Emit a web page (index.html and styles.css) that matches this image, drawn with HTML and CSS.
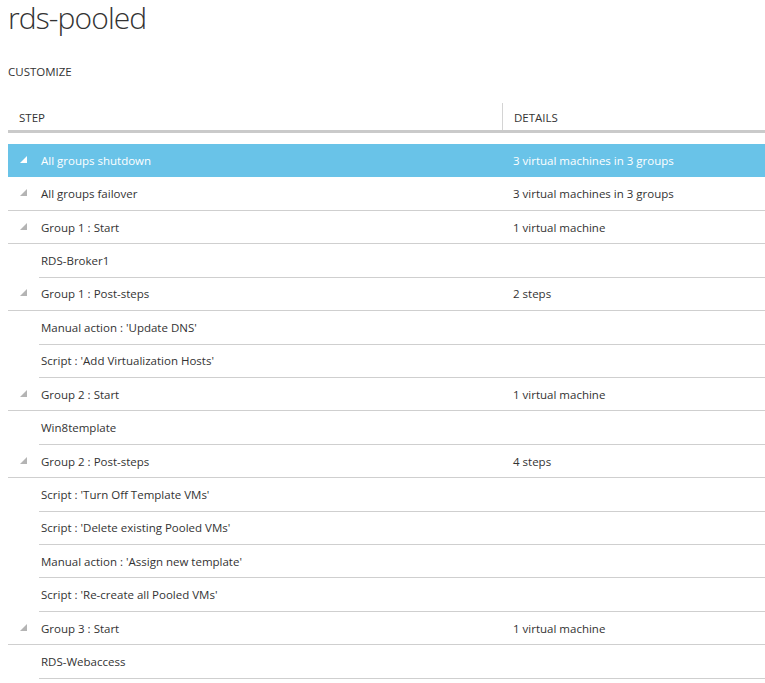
FILE: index.html
```html
<!DOCTYPE html>
<html>
<head>
<meta charset="utf-8">
<link rel="stylesheet" href="styles.css">
</head>
<body>
<div class="page">
  <h1 class="title">rds-pooled</h1>
  <div class="section-label">CUSTOMIZE</div>
  <div class="table">
    <div class="head">
      <div class="hcell step-h">STEP</div>
      <div class="hcell details-h">DETAILS</div>
    </div>
    <div class="rows">
      <div class="row group selected"><div class="step"><svg class="tri" viewBox="0 0 7 7"><polygon points="7,0 7,7 0,7"/></svg><span>All groups shutdown</span></div><div class="details">3 virtual machines in 3 groups</div></div>
      <div class="row group"><div class="step"><svg class="tri" viewBox="0 0 7 7"><polygon points="7,0 7,7 0,7"/></svg><span>All groups failover</span></div><div class="details">3 virtual machines in 3 groups</div></div>
      <div class="row group"><div class="step"><svg class="tri" viewBox="0 0 7 7"><polygon points="7,0 7,7 0,7"/></svg><span>Group 1 : Start</span></div><div class="details">1 virtual machine</div></div>
      <div class="row child"><div class="step"><span>RDS-Broker1</span></div><div class="details"></div></div>
      <div class="row group"><div class="step"><svg class="tri" viewBox="0 0 7 7"><polygon points="7,0 7,7 0,7"/></svg><span>Group 1 : Post-steps</span></div><div class="details">2 steps</div></div>
      <div class="row child"><div class="step"><span>Manual action : 'Update DNS'</span></div><div class="details"></div></div>
      <div class="row child"><div class="step"><span>Script : 'Add Virtualization Hosts'</span></div><div class="details"></div></div>
      <div class="row group"><div class="step"><svg class="tri" viewBox="0 0 7 7"><polygon points="7,0 7,7 0,7"/></svg><span>Group 2 : Start</span></div><div class="details">1 virtual machine</div></div>
      <div class="row child"><div class="step"><span>Win8template</span></div><div class="details"></div></div>
      <div class="row group"><div class="step"><svg class="tri" viewBox="0 0 7 7"><polygon points="7,0 7,7 0,7"/></svg><span>Group 2 : Post-steps</span></div><div class="details">4 steps</div></div>
      <div class="row child"><div class="step"><span>Script : 'Turn Off Template VMs'</span></div><div class="details"></div></div>
      <div class="row child"><div class="step"><span>Script : 'Delete existing Pooled VMs'</span></div><div class="details"></div></div>
      <div class="row child"><div class="step"><span>Manual action : 'Assign new template'</span></div><div class="details"></div></div>
      <div class="row child"><div class="step"><span>Script : 'Re-create all Pooled VMs'</span></div><div class="details"></div></div>
      <div class="row group"><div class="step"><svg class="tri" viewBox="0 0 7 7"><polygon points="7,0 7,7 0,7"/></svg><span>Group 3 : Start</span></div><div class="details">1 virtual machine</div></div>
      <div class="row child"><div class="step"><span>RDS-Webaccess</span></div><div class="details"></div></div>
    </div>
  </div>
</div>
</body>
</html>
```
FILE: styles.css
```css
html, body {
  margin: 0;
  padding: 0;
  background: #fff;
}
body {
  font-family: "Open Sans", "Noto Sans", sans-serif;
  color: #333;
  overflow: hidden;
}
.page {
  padding-left: 8px;
}
.title {
  margin: 0;
  font-size: 30px;
  font-weight: 300;
  line-height: 36px;
  color: #333;
  letter-spacing: -0.9px;
}
.section-label {
  margin-top: 28px;
  font-size: 11.5px;
  line-height: 16px;
  color: #333;
}
.table {
  margin-top: 23px;
}
.head {
  display: grid;
  grid-template-columns: 494px 1fr;
  height: 27px;
  border-bottom: 3px solid #cacaca;
}
.hcell {
  font-size: 11.5px;
  display: flex;
  align-items: center;
  padding-top: 2px;
  color: #333;
}
.step-h {
  padding-left: 11px;
}
.details-h {
  border-left: 1px solid #d4d4d4;
  padding-left: 11px;
}
.rows {
  margin-top: 11px;
}
.row {
  display: grid;
  grid-template-columns: 494px 1fr;
  height: 33.43px;
  box-sizing: border-box;
  border-bottom: 1px solid #cfcfcf;
  font-size: 11.5px;
  color: #333;
}
.row.child {
  margin-left: 31px;
  grid-template-columns: 463px 1fr;
}
.row.selected {
  background: #69c3e8;
  color: #fff;
  border-bottom-color: #69c3e8;
}
.step {
  display: flex;
  align-items: center;
  padding-left: 12px;
}
.row.child .step {
  padding-left: 2px;
}
.tri {
  width: 7px;
  height: 7px;
  margin-right: 14px;
  margin-bottom: 2px;
  fill: #b4b4b4;
}
.row.selected .tri {
  fill: #fff;
}
.details {
  display: flex;
  align-items: center;
  padding-left: 11px;
}
```
